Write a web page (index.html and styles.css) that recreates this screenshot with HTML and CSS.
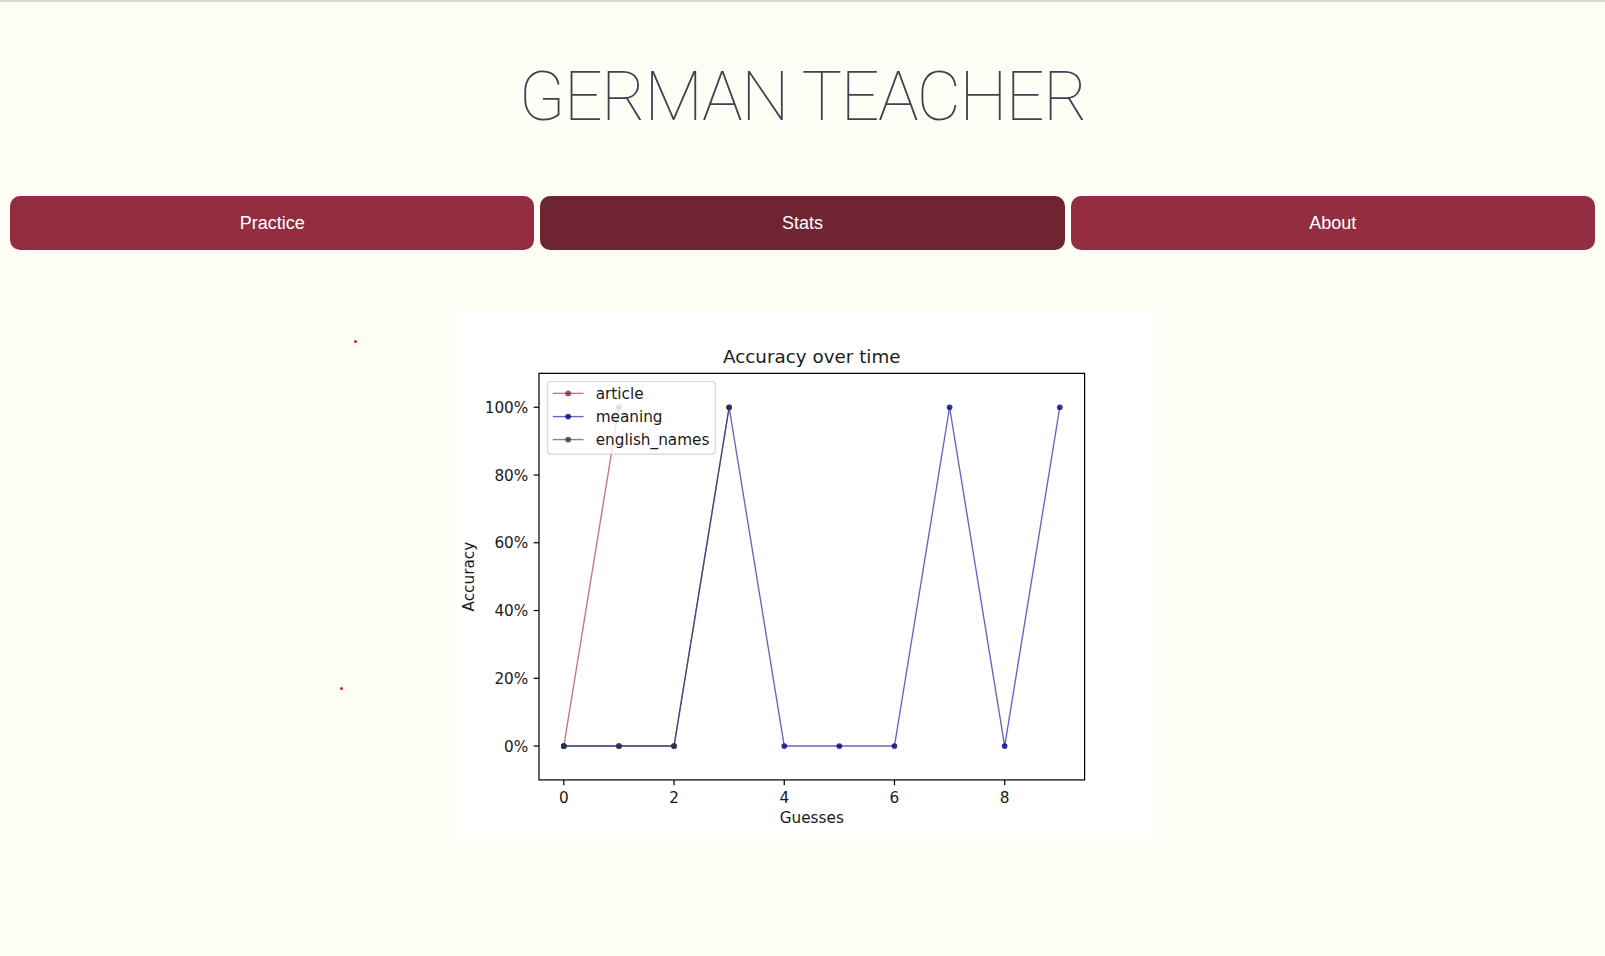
FILE: index.html
```html
<!DOCTYPE html>
<html lang="en">
<head>
<meta charset="utf-8">
<title>German Teacher</title>
<link rel="stylesheet" href="styles.css">
</head>
<body>
<div class="topline"></div>
<header class="header">
  <h1 class="title">GERMAN TEACHER</h1>
</header>
<nav class="nav">
  <a class="tab">Practice</a>
  <a class="tab tab-active">Stats</a>
  <a class="tab">About</a>
</nav>
<main class="stats">
  <span class="dot dot-one"></span>
  <span class="dot dot-two"></span>
  <svg class="chart" viewBox="0 0 640 480" width="704" height="528" xmlns="http://www.w3.org/2000/svg">
    <rect x="0" y="0" width="640" height="480" fill="#ffffff"/>
    <g class="series">
      <path d="M102.55,396.4 L152.65,88.4" fill="none" stroke="#9b1b30" stroke-opacity="0.6" stroke-width="1.25"/>
      <g fill="#8a1a2c" fill-opacity="0.75">
        <circle cx="102.55" cy="396.4" r="2.6"/>
        <circle cx="152.65" cy="88.4" r="2.6"/>
      </g>
      <path d="M102.55,396.4 L152.65,396.4 L202.75,396.4 L252.85,88.4 L302.95,396.4 L353.05,396.4 L403.15,396.4 L453.25,88.4 L503.35,396.4 L553.45,88.4" fill="none" stroke="#00008b" stroke-opacity="0.6" stroke-width="1.25"/>
      <g fill="#00008b" fill-opacity="0.8">
        <circle cx="102.55" cy="396.4" r="2.6"/>
        <circle cx="152.65" cy="396.4" r="2.6"/>
        <circle cx="202.75" cy="396.4" r="2.6"/>
        <circle cx="252.85" cy="88.4" r="2.6"/>
        <circle cx="302.95" cy="396.4" r="2.6"/>
        <circle cx="353.05" cy="396.4" r="2.6"/>
        <circle cx="403.15" cy="396.4" r="2.6"/>
        <circle cx="453.25" cy="88.4" r="2.6"/>
        <circle cx="503.35" cy="396.4" r="2.6"/>
        <circle cx="553.45" cy="88.4" r="2.6"/>
      </g>
      <path d="M102.55,396.4 L152.65,396.4 L202.75,396.4 L252.85,88.4" fill="none" stroke="#2f3446" stroke-opacity="0.6" stroke-width="1.25"/>
      <g fill="#2f3446" fill-opacity="0.8">
        <circle cx="102.55" cy="396.4" r="2.6"/>
        <circle cx="152.65" cy="396.4" r="2.6"/>
        <circle cx="202.75" cy="396.4" r="2.6"/>
        <circle cx="252.85" cy="88.4" r="2.6"/>
      </g>
    </g>
    <rect x="80" y="57.6" width="496" height="369.6" fill="none" stroke="#000" stroke-width="1.11"/>
    <g class="ticks" stroke="#000" stroke-width="1.11">
      <line x1="75.14" y1="396.4" x2="80" y2="396.4"/>
      <line x1="75.14" y1="334.8" x2="80" y2="334.8"/>
      <line x1="75.14" y1="273.2" x2="80" y2="273.2"/>
      <line x1="75.14" y1="211.6" x2="80" y2="211.6"/>
      <line x1="75.14" y1="150.0" x2="80" y2="150.0"/>
      <line x1="75.14" y1="88.4" x2="80" y2="88.4"/>
      <line x1="102.55" y1="427.2" x2="102.55" y2="432.06"/>
      <line x1="202.75" y1="427.2" x2="202.75" y2="432.06"/>
      <line x1="302.95" y1="427.2" x2="302.95" y2="432.06"/>
      <line x1="403.15" y1="427.2" x2="403.15" y2="432.06"/>
      <line x1="503.35" y1="427.2" x2="503.35" y2="432.06"/>
    </g>
    <g class="chart-text" font-family="DejaVu Sans, sans-serif" font-size="13.89" fill="#1a1a1a">
      <text x="70.3" y="401.4" text-anchor="end">0%</text>
      <text x="70.3" y="339.8" text-anchor="end">20%</text>
      <text x="70.3" y="278.2" text-anchor="end">40%</text>
      <text x="70.3" y="216.6" text-anchor="end">60%</text>
      <text x="70.3" y="155.0" text-anchor="end">80%</text>
      <text x="70.3" y="93.4" text-anchor="end">100%</text>
      <text x="102.55" y="448" text-anchor="middle">0</text>
      <text x="202.75" y="448" text-anchor="middle">2</text>
      <text x="302.95" y="448" text-anchor="middle">4</text>
      <text x="403.15" y="448" text-anchor="middle">6</text>
      <text x="503.35" y="448" text-anchor="middle">8</text>
      <text x="328" y="466.7" text-anchor="middle">Guesses</text>
      <text transform="translate(20.6,242.4) rotate(-90)" text-anchor="middle">Accuracy</text>
      <text x="328" y="48.5" text-anchor="middle" font-size="16.67">Accuracy over time</text>
    </g>
    <g class="legend">
      <rect x="87.8" y="65" width="152.5" height="66" rx="2.8" fill="#ffffff" fill-opacity="0.8" stroke="#cccccc" stroke-opacity="0.8" stroke-width="1.11"/>
      <line x1="92.5" y1="75.8" x2="120.5" y2="75.8" stroke="#9b1b30" stroke-opacity="0.6" stroke-width="1.25"/>
      <circle cx="106.5" cy="75.8" r="2.6" fill="#8a1a2c" fill-opacity="0.75"/>
      <line x1="92.5" y1="96.9" x2="120.5" y2="96.9" stroke="#00008b" stroke-opacity="0.6" stroke-width="1.25"/>
      <circle cx="106.5" cy="96.9" r="2.6" fill="#00008b" fill-opacity="0.8"/>
      <line x1="92.5" y1="117.8" x2="120.5" y2="117.8" stroke="#2f3446" stroke-opacity="0.6" stroke-width="1.25"/>
      <circle cx="106.5" cy="117.8" r="2.6" fill="#2f3446" fill-opacity="0.8"/>
      <g font-family="DejaVu Sans, sans-serif" font-size="13.89" fill="#1a1a1a">
        <text x="131.5" y="80.6">article</text>
        <text x="131.5" y="101.7">meaning</text>
        <text x="131.5" y="122.6">english_names</text>
      </g>
    </g>
  </svg>
</main>
</body>
</html>
```

FILE: styles.css
```css
html, body {
  margin: 0;
  padding: 0;
}

body {
  background: #fefef7;
  font-family: "Liberation Sans", Arial, sans-serif;
  min-height: 956px;
}

.topline {
  height: 2px;
  background: #dcd8cf;
}

.header {
  padding-top: 51px;
  display: flex;
  justify-content: center;
}

.title {
  margin: 0;
  font-family: Roboto, "Open Sans", sans-serif;
  font-weight: 100;
  font-size: 68px;
  line-height: 88px;
  color: #3d4150;
  letter-spacing: -1.4px;
}

.nav {
  margin-top: 55px;
  padding: 0 10px;
  display: flex;
  gap: 6px;
}

.tab {
  flex: 1;
  height: 54px;
  border-radius: 10px;
  background: #922e40;
  color: #ffffff;
  font-size: 18px;
  display: flex;
  align-items: center;
  justify-content: center;
  cursor: pointer;
}

.tab-active {
  background: #6f2431;
}

.stats {
  position: relative;
  margin-top: 60px;
  display: flex;
  justify-content: center;
}

.chart {
  display: block;
}

.dot {
  position: absolute;
  width: 3px;
  height: 3px;
  border-radius: 50%;
  background: #e51b1b;
}

.dot-one {
  left: 354px;
  top: 30px;
}

.dot-two {
  left: 340px;
  top: 377px;
}
```
